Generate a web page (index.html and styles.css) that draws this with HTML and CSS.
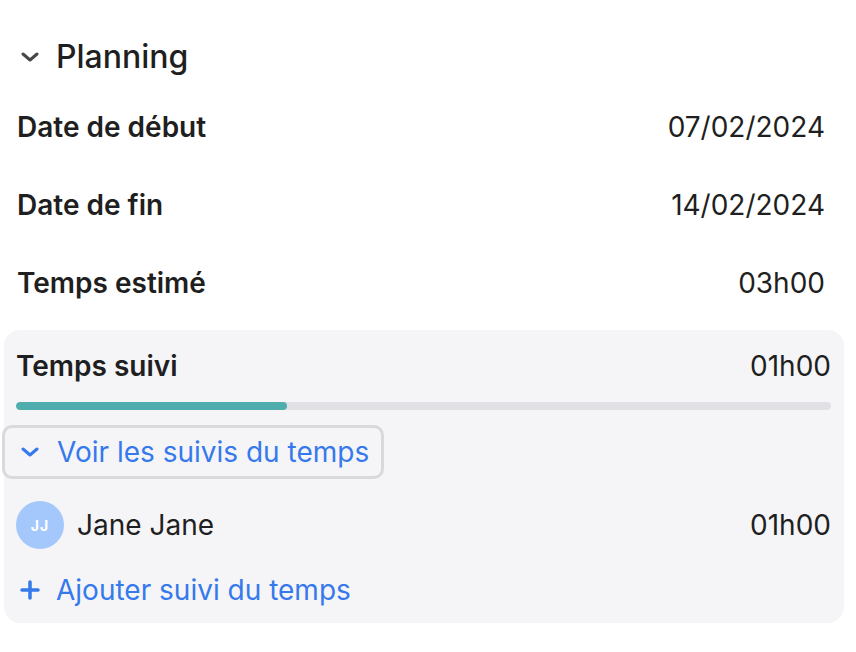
FILE: index.html
```html
<!DOCTYPE html>
<html lang="fr">
<head>
    <meta charset="UTF-8">
    <meta name="viewport" content="width=device-width, initial-scale=1.0">
    <title>Planning</title>
    <link rel="stylesheet" href="styles.css">
</head>
<body>
    <section class="planning">
        <h2 class="section-title">
            <svg class="chevron" width="18" height="10" viewBox="0 0 18 10"><path d="M2 2l7 6 7-6" fill="none" stroke="currentColor" stroke-width="3" stroke-linecap="round" stroke-linejoin="round"/></svg>
            Planning
        </h2>

        <div class="row">
            <span class="label">Date de début</span>
            <span class="value">07/02/2024</span>
        </div>
        <div class="row">
            <span class="label">Date de fin</span>
            <span class="value">14/02/2024</span>
        </div>
        <div class="row">
            <span class="label">Temps estimé</span>
            <span class="value">03h00</span>
        </div>

        <div class="tracking">
            <div class="tracking-head">
                <span class="label">Temps suivi</span>
                <span class="value">01h00</span>
            </div>
            <div class="progress">
                <div class="progress-fill" style="width: 33.3%"></div>
            </div>

            <button class="toggle">
                <svg class="chevron" width="18" height="10" viewBox="0 0 18 10"><path d="M2 2l7 6 7-6" fill="none" stroke="currentColor" stroke-width="3" stroke-linecap="round" stroke-linejoin="round"/></svg>
                Voir les suivis du temps
            </button>

            <div class="entry">
                <span class="avatar">JJ</span>
                <span class="entry-name">Jane Jane</span>
                <span class="value">01h00</span>
            </div>

            <button class="add">
                <svg class="plus" width="20" height="20" viewBox="0 0 20 20"><path d="M10 2v16M2 10h16" fill="none" stroke="currentColor" stroke-width="3.5" stroke-linecap="round"/></svg>
                Ajouter suivi du temps
            </button>
        </div>
    </section>
</body>
</html>
```

FILE: styles.css
```css
body {
    margin: 0;
    background: #fff;
    font-family: Inter, "Noto Sans", sans-serif;
    color: #1f1f22;
}

.planning {
    padding: 36px 31px 30px 4px;
    width: 821px;
}

.section-title {
    display: flex;
    align-items: center;
    gap: 17px;
    margin: 0 0 10px 17px;
    font-size: 32px;
    font-weight: 500;
    line-height: 42px;
}

.section-title .chevron {
    color: #46464b;
}

.row {
    display: flex;
    justify-content: space-between;
    align-items: center;
    height: 78px;
    margin-left: 13px;
    font-size: 28px;
}

.label {
    font-weight: 600;
}

.tracking {
    background: #f5f5f7;
    border-radius: 16px;
    margin: 8px -19px 0 0;
    padding: 18px 13px 15px 12px;
    font-size: 28px;
}

.tracking-head {
    display: flex;
    justify-content: space-between;
    align-items: center;
    line-height: 36px;
}

.progress {
    margin: 18px 0 15px;
    height: 8px;
    border-radius: 4px;
    background: #e1e1e5;
    overflow: hidden;
}

.progress-fill {
    height: 100%;
    border-radius: 4px;
    background: #4fadae;
}

button {
    display: flex;
    align-items: center;
    background: none;
    border: none;
    font: inherit;
    color: #3579ec;
    cursor: pointer;
}

.toggle {
    margin-left: -14px;
    gap: 18px;
    height: 54px;
    padding: 0 12px 0 16px;
    border: 3px solid #d9d9dd;
    border-radius: 10px;
}

.entry {
    display: flex;
    align-items: center;
    margin-top: 22px;
    height: 48px;
}

.avatar {
    display: flex;
    align-items: center;
    justify-content: center;
    width: 48px;
    height: 48px;
    border-radius: 50%;
    background: #a4c8fb;
    color: #fff;
    font-size: 14px;
    font-weight: 700;
    letter-spacing: 1px;
}

.entry-name {
    flex: 1;
    margin-left: 13px;
}

.add {
    margin-top: 23px;
    padding: 0 0 0 4px;
    gap: 16px;
    height: 36px;
}
```
